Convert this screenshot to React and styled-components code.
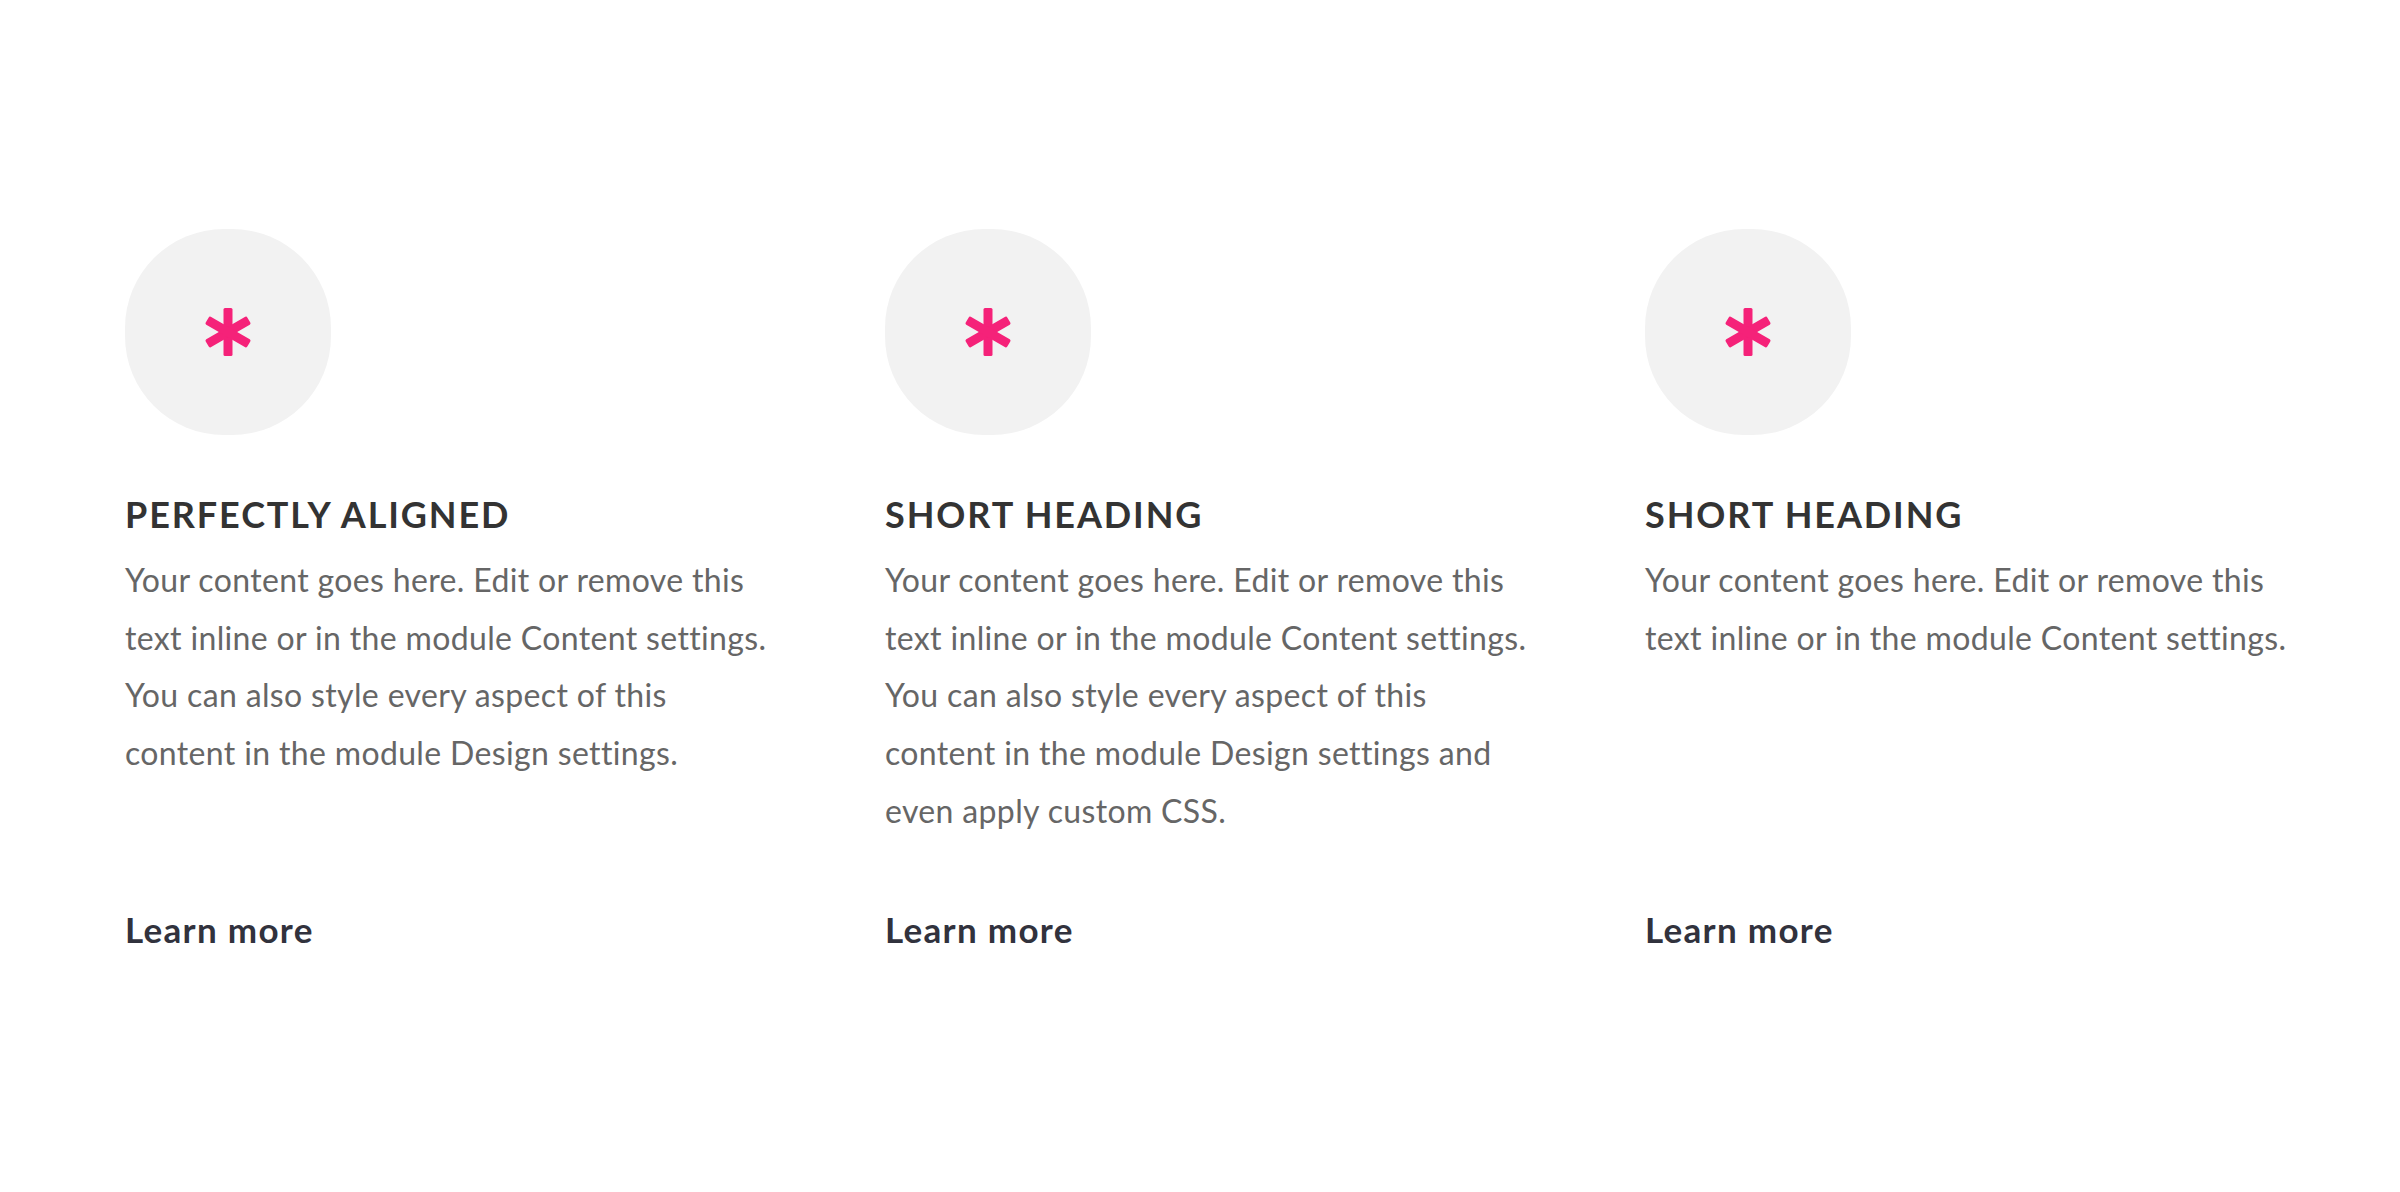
import styled, { createGlobalStyle } from 'styled-components';

const GlobalStyle = createGlobalStyle`
  html, body {
    margin: 0;
    padding: 0;
    background: #ffffff;
  }
  body {
    font-family: Lato, 'Liberation Sans', sans-serif;
    -webkit-font-smoothing: antialiased;
  }
`;

const Section = styled.section`
  width: 2400px;
  height: 1192px;
  box-sizing: border-box;
  padding: 229px 0 0 125px;
`;

const Row = styled.div`
  display: grid;
  grid-template-columns: repeat(3, 645px);
  column-gap: 115px;
  align-items: stretch;
`;

const Column = styled.div`
  display: flex;
  flex-direction: column;
  align-items: flex-start;
`;

const IconCircle = styled.div`
  width: 206px;
  height: 206px;
  border-radius: 48%;
  background: #f2f2f2;
  display: flex;
  align-items: center;
  justify-content: center;
`;

const Heading = styled.h4`
  margin: 58px 0 0;
  font-size: 36px;
  line-height: 1.2;
  font-weight: 700;
  letter-spacing: 1.9px;
  color: #333333;
  text-transform: uppercase;
`;

const Body = styled.p`
  margin: 15px 0 69px;
  font-size: 32px;
  line-height: 57.6px;
  font-weight: 400;
  letter-spacing: 0.35px;
  color: #666666;
`;

const MoreLink = styled.a`
  margin-top: auto;
  font-size: 35px;
  line-height: 1.2;
  font-weight: 700;
  letter-spacing: 1.3px;
  color: #31323d;
  text-decoration: none;
`;

const Asterisk = () => (
  <svg width="48" height="50" viewBox="-24 -25 48 50" aria-hidden="true">
    {[0, 60, 120].map((deg) => (
      <rect
        key={deg}
        x="-4.5"
        y="-24"
        width="9"
        height="48"
        rx="1.5"
        fill="#f52279"
        transform={`rotate(${deg})`}
      />
    ))}
  </svg>
);

const items = [
  {
    title: 'Perfectly Aligned',
    text: 'Your content goes here. Edit or remove this text inline or in the module Content settings. You can also style every aspect of this content in the module Design settings.',
  },
  {
    title: 'Short Heading',
    text: 'Your content goes here. Edit or remove this text inline or in the module Content settings. You can also style every aspect of this content in the module Design settings and even apply custom CSS.',
  },
  {
    title: 'Short Heading',
    text: 'Your content goes here. Edit or remove this text inline or in the module Content settings.',
  },
];

export default function App() {
  return (
    <>
      <GlobalStyle />
      <Section>
        <Row>
          {items.map((item, i) => (
            <Column key={i}>
              <IconCircle>
                <Asterisk />
              </IconCircle>
              <Heading>{item.title}</Heading>
              <Body>{item.text}</Body>
              <MoreLink href="#">Learn more</MoreLink>
            </Column>
          ))}
        </Row>
      </Section>
    </>
  );
}
